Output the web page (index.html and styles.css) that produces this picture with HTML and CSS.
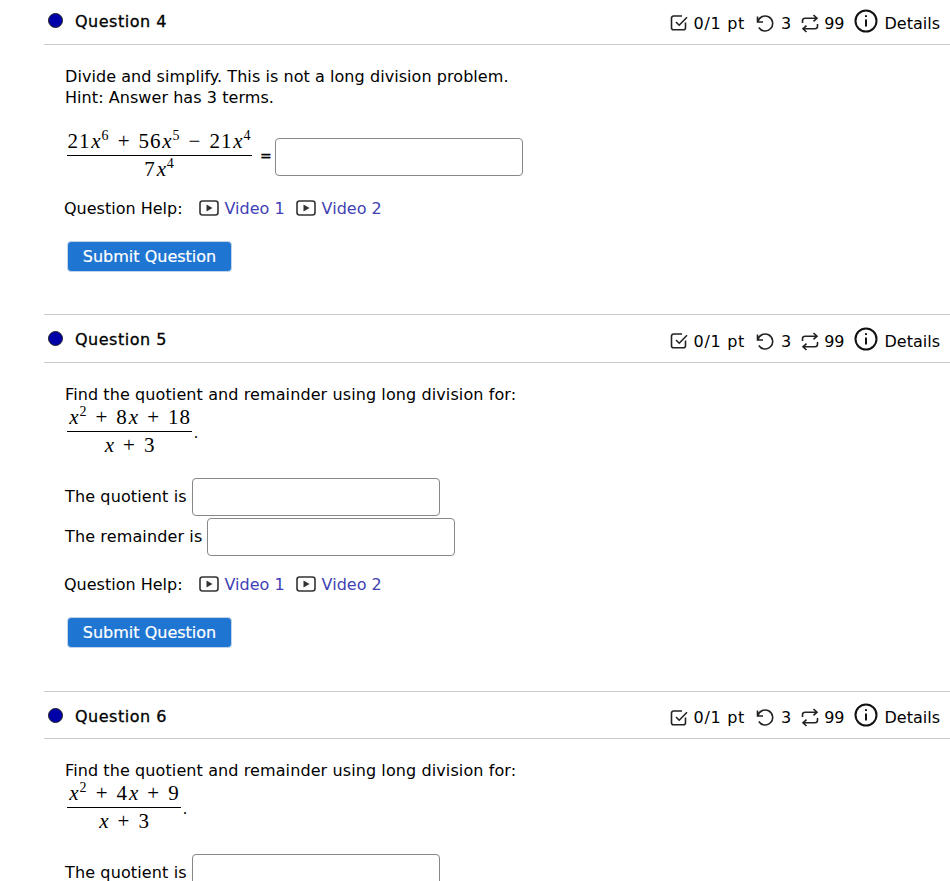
FILE: index.html
```html
<!DOCTYPE html>
<html lang="en">
<head>
  <meta charset="UTF-8">
  <meta name="viewport" content="width=device-width,initial-scale=1.0">
  <title>Questions</title>
  <link rel="stylesheet" href="styles.css">
</head>
<body>
  <svg class="defs" width="0" height="0">
    <symbol id="i-check" viewBox="0 0 18 18"><path d="M15.500 8.500v5.300a2 2 0 0 1-2 2H3.500a2 2 0 0 1-2-2V4a2 2 0 0 1 2-2h8.500M6 8l3.200 3.200L17 3.200"/></symbol>
    <symbol id="i-undo" viewBox="0 0 19 19"><path d="M2.500 2.500v5.500H8M2.800 8A7.500 7.500 0 1 1 3.800 13.500"/></symbol>
    <symbol id="i-retry" viewBox="0 0 18 19"><path d="M12.500 1l3.500 3.200-3.500 3.200M1.500 9V6.700a2.500 2.500 0 0 1 2.500-2.500h12M5.500 18L2 14.800l3.500-3.200M16.500 10v2.300a2.500 2.500 0 0 1-2.500 2.500H2"/></symbol>
    <symbol id="i-info" viewBox="0 0 24 24"><circle cx="12" cy="12" r="10.500"/><path d="M12 10.500v7M12 6.300v1.800"/></symbol>
    <symbol id="i-video" viewBox="0 0 20 16"><rect x="1" y="1" width="18" height="14" rx="2.500"/><path class="solid" d="M7.500 4.500l6 3.500-6 3.500z"/></symbol>
  </svg>

  <section class="question first">
    <header class="q-head">
      <span class="dot"></span>
      <h2>Question 4</h2>
      <div class="meta">
        <svg class="ico"><use href="#i-check"/></svg><span class="pts">0/1 pt</span>
        <svg class="ico undo"><use href="#i-undo"/></svg><span>3</span>
        <svg class="ico retry"><use href="#i-retry"/></svg><span>99</span>
        <svg class="ico info"><use href="#i-info"/></svg><span>Details</span>
      </div>
    </header>
    <div class="q-body">
      <p class="intro">Divide and simplify. This is not a long division problem.<br>Hint: Answer has 3 terms.</p>
      <div class="eq">
        <span class="frac w185">
          <span class="num">21<i>x</i><sup>6</sup> + 56<i>x</i><sup>5</sup> − 21<i>x</i><sup>4</sup></span>
          <span class="den">7<i>x</i><sup>4</sup></span>
        </span>
        <span class="equals">=</span>
        <input class="answer" type="text">
      </div>
      <div class="help">
        <span class="help-label">Question Help:</span>
        <a href="#"><svg class="vid"><use href="#i-video"/></svg>Video 1</a>
        <a href="#"><svg class="vid"><use href="#i-video"/></svg>Video 2</a>
      </div>
      <button class="submit">Submit Question</button>
    </div>
  </section>

  <section class="question">
    <header class="q-head">
      <span class="dot"></span>
      <h2>Question 5</h2>
      <div class="meta">
        <svg class="ico"><use href="#i-check"/></svg><span class="pts">0/1 pt</span>
        <svg class="ico undo"><use href="#i-undo"/></svg><span>3</span>
        <svg class="ico retry"><use href="#i-retry"/></svg><span>99</span>
        <svg class="ico info"><use href="#i-info"/></svg><span>Details</span>
      </div>
    </header>
    <div class="q-body">
      <p class="lead">Find the quotient and remainder using long division for:</p>
      <div class="eq-block">
        <span class="frac w125">
          <span class="num"><i>x</i><sup>2</sup> + 8<i>x</i> + 18</span>
          <span class="den"><i>x</i> + 3</span>
        </span><span class="period">.</span>
      </div>
      <div class="field">The quotient is <input class="answer" type="text"></div>
      <div class="field">The remainder is <input class="answer" type="text"></div>
      <div class="help">
        <span class="help-label">Question Help:</span>
        <a href="#"><svg class="vid"><use href="#i-video"/></svg>Video 1</a>
        <a href="#"><svg class="vid"><use href="#i-video"/></svg>Video 2</a>
      </div>
      <button class="submit">Submit Question</button>
    </div>
  </section>

  <section class="question last">
    <header class="q-head">
      <span class="dot"></span>
      <h2>Question 6</h2>
      <div class="meta">
        <svg class="ico"><use href="#i-check"/></svg><span class="pts">0/1 pt</span>
        <svg class="ico undo"><use href="#i-undo"/></svg><span>3</span>
        <svg class="ico retry"><use href="#i-retry"/></svg><span>99</span>
        <svg class="ico info"><use href="#i-info"/></svg><span>Details</span>
      </div>
    </header>
    <div class="q-body">
      <p class="lead">Find the quotient and remainder using long division for:</p>
      <div class="eq-block">
        <span class="frac w114">
          <span class="num"><i>x</i><sup>2</sup> + 4<i>x</i> + 9</span>
          <span class="den"><i>x</i> + 3</span>
        </span><span class="period">.</span>
      </div>
      <div class="field">The quotient is <input class="answer" type="text"></div>
    </div>
  </section>
</body>
</html>
```

FILE: styles.css
```css
html, body {
  height: 881px;
  overflow: hidden;
}
body {
  margin: 0;
  padding-left: 44px;
  background: #fff;
  color: #000;
  font-family: "DejaVu Sans", sans-serif;
  font-size: 16px;
  line-height: 21px;
}
.defs { position: absolute; }

.question { height: 377px; }
.question.first { height: 318px; margin-top: -4px; }

.q-head {
  display: flex;
  align-items: center;
  height: 47px;
  border-top: 1px solid #ccc;
  border-bottom: 1px solid #ccc;
  padding: 0 10px 0 4px;
}
.last .q-head { height: 46px; }
.dot {
  width: 13px;
  height: 13px;
  border: 1px solid #222;
  border-radius: 50%;
  background: #0000a8;
  margin-right: 12px;
}
.q-head h2 {
  margin: 2px 0 0;
  font-size: 16px;
  font-weight: normal;
  letter-spacing: 0.5px;
  -webkit-text-stroke: 0.3px #000;
}
.meta {
  margin-left: auto;
  display: flex;
  align-items: center;
  padding-top: 5px;
}
.pts { letter-spacing: 0.7px; }
.ico {
  width: 18px;
  height: 18px;
  fill: none;
  stroke: #222;
  stroke-width: 1.6;
  margin: 0 6px 0 10px;
}
.ico.undo {
  width: 19px;
  height: 19px;
  margin-right: 7px;
}
.ico.retry {
  height: 19px;
  margin: 0 5px 0 10px;
}
.ico.info {
  width: 24px;
  height: 24px;
  stroke: #111;
  stroke-width: 2;
  margin: -5px 7px 0 9px;
}
.q-body { padding: 21px 0 0 21px; }
.q-body p { margin: 0; }
.intro { letter-spacing: 0.06px; }

.eq {
  display: flex;
  align-items: center;
  margin-top: 20px;
}
.eq .answer { margin-top: 2px; }
.frac {
  display: inline-flex;
  flex-direction: column;
  font-family: "Liberation Serif", serif;
  font-size: 21px;
  line-height: 27px;
  letter-spacing: 0.9px;
  word-spacing: 2px;
  text-align: center;
  white-space: nowrap;
}
.w185 { width: 185px; margin-left: 2px; }
.w125 { width: 125px; margin-left: 2px; }
.w114 { width: 114px; margin-left: 2px; }
.num { border-bottom: 1px solid #000; }
.frac i { margin-left: 1px; }
.frac sup {
  font-size: 14px;
  line-height: 0;
  vertical-align: 8px;
}
.equals {
  margin: 2px 3px 0 8px;
  font-size: 14px;
  -webkit-text-stroke: 0.3px #000;
}
.answer {
  box-sizing: border-box;
  width: 248px;
  height: 38px;
  margin: 0;
  border: 1px solid #888;
  border-radius: 4px;
  background: #fff;
}
.help {
  display: flex;
  align-items: center;
  margin: 15px 0 0 -1px;
}
.help-label { margin-right: 16px; }
.help a {
  display: flex;
  align-items: center;
  margin-right: 11px;
  color: #3f3fb5;
  text-decoration: none;
}
.vid {
  width: 20px;
  height: 16px;
  margin: -2px 6px 0 0;
  fill: none;
  stroke: #333;
  stroke-width: 1.6;
}
.solid { fill: #333; stroke: none; }
.submit {
  display: block;
  width: 165px;
  height: 31px;
  margin: 22px 0 0 2px;
  padding: 0;
  border: 1px solid #c4d4e8;
  border-radius: 4px;
  background: #1f76d2;
  color: #fff;
  font: 16px "DejaVu Sans", sans-serif;
  -webkit-text-stroke: 0.2px #fff;
}
.lead { letter-spacing: 0.1px; }
.eq-block {
  display: flex;
  align-items: center;
  margin-top: -1px;
}
.period {
  margin: 2px 0 0 2px;
  font-family: "Liberation Serif", serif;
}
.field {
  display: flex;
  align-items: center;
  gap: 5px;
  height: 40px;
  letter-spacing: 0.13px;
}
.field .answer { margin-top: 2px; }
.eq-block + .field { margin-top: 17px; }
.field + .help { margin-top: 18px; }
```
